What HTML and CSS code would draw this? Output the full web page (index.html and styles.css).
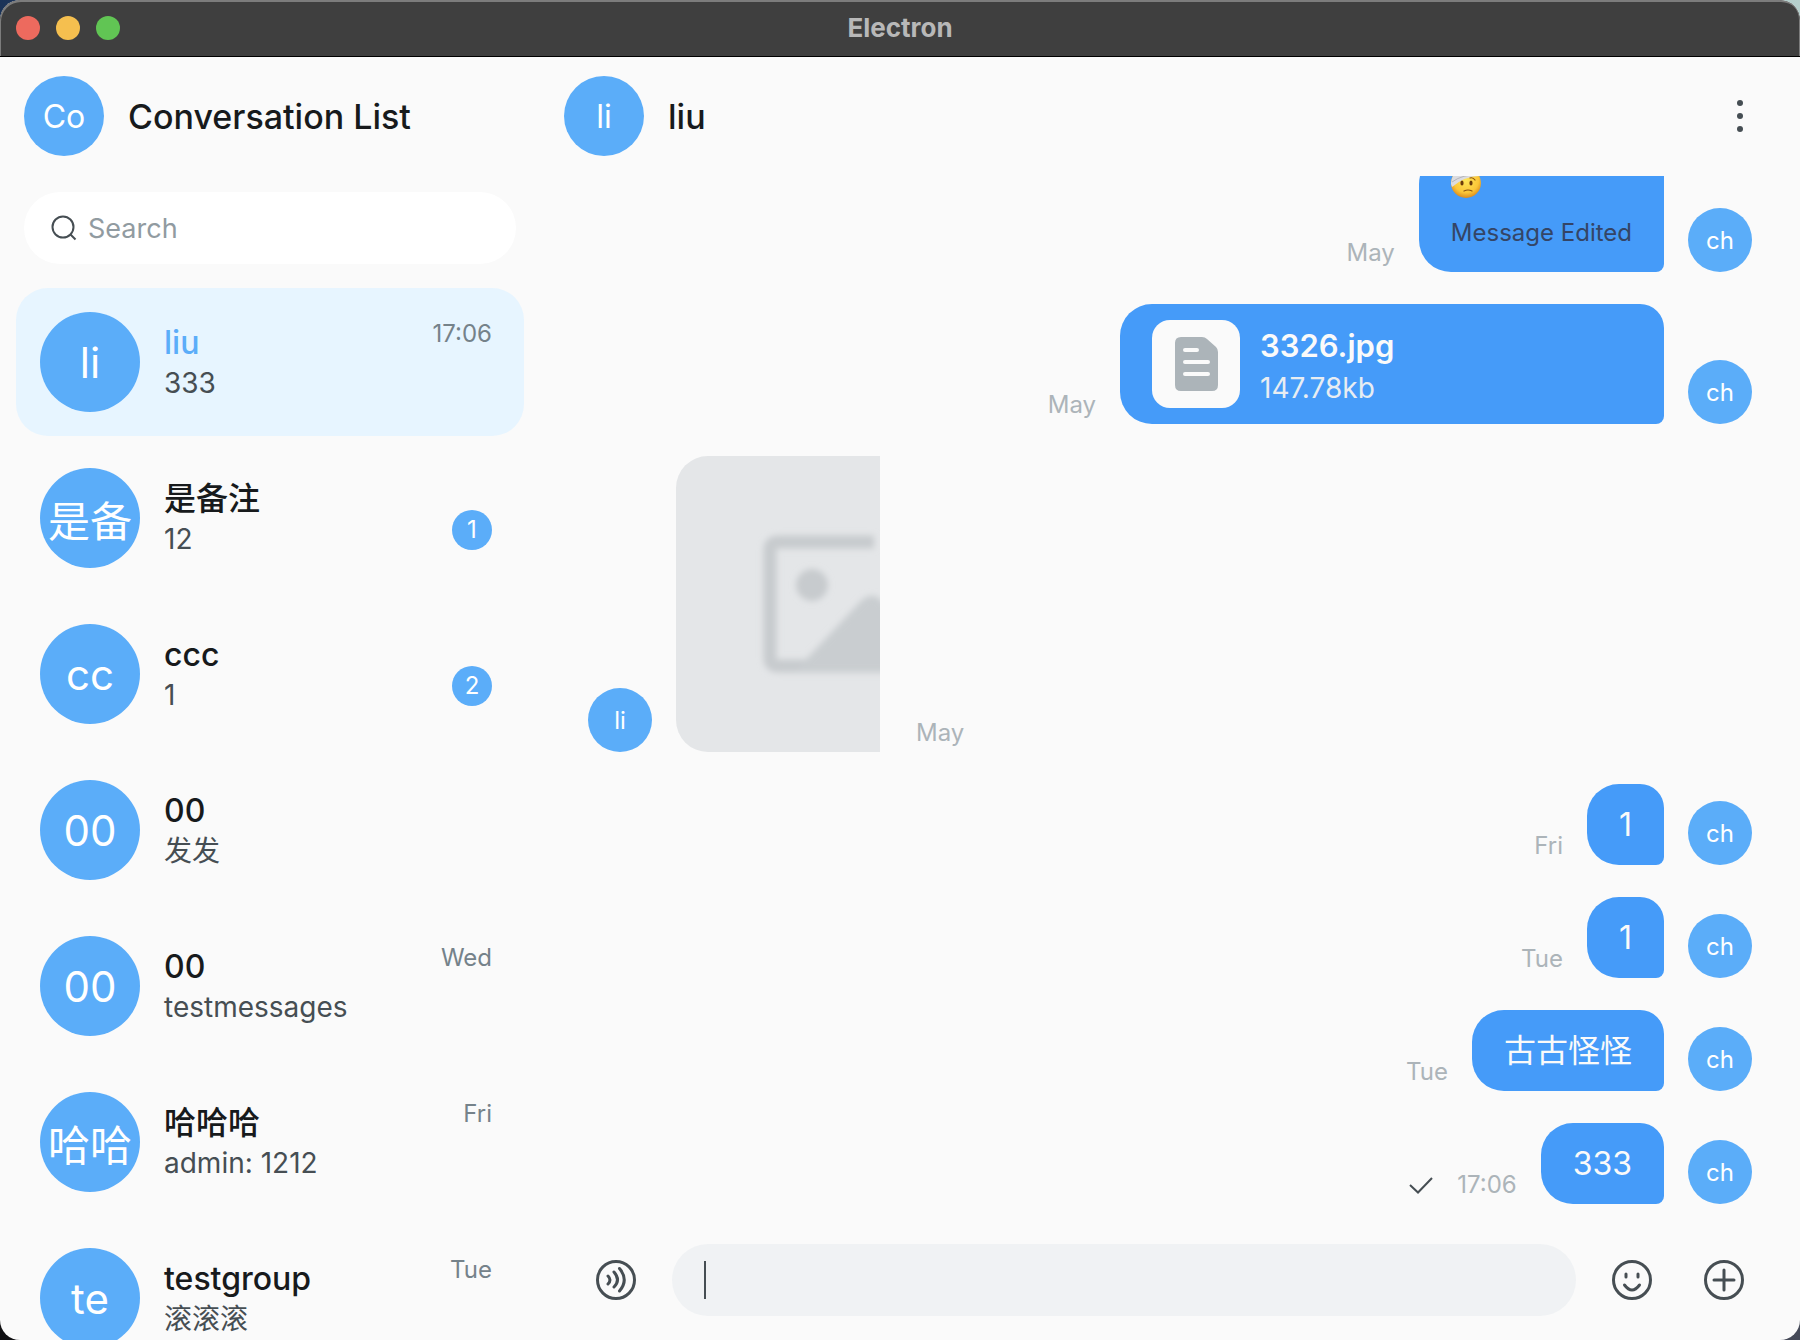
FILE: index.html
```html
<!DOCTYPE html>
<html lang="en">
<head>
<meta charset="utf-8">
<title>Electron</title>
<link rel="stylesheet" href="styles.css">
</head>
<body>
<div class="window">
  <header class="titlebar">
    <div class="lights"><button class="light close" aria-label="Close"></button><button class="light minimize" aria-label="Minimize"></button><button class="light expand" aria-label="Zoom"></button></div>
    <div class="window-title">Electron</div>
  </header>
  <div class="app">
    <aside class="sidebar">
      <div class="pane-header"><span class="avatar avatar-md">Co</span><h1 class="pane-title">Conversation List</h1></div>
      <label class="search">
        <svg class="search-icon" viewBox="0 0 24 24" aria-hidden="true"><circle cx="11" cy="11" r="10.5"/><path d="M18.5 18.5 23.5 23.5"/></svg>
        <input class="search-input" type="search" placeholder="Search" aria-label="Search">
      </label>
      <ul class="conversations">
        <li class="conversation selected"><span class="avatar avatar-lg">li</span><div class="summary"><div class="name">liu</div><div class="preview">333</div></div><div class="meta"><time class="when">17:06</time></div></li>
        <li class="conversation"><span class="avatar avatar-lg">是备</span><div class="summary"><div class="name">是备注</div><div class="preview">12</div></div><div class="meta"><span class="badge">1</span></div></li>
        <li class="conversation"><span class="avatar avatar-lg">cc</span><div class="summary"><div class="name">ccc</div><div class="preview">1</div></div><div class="meta"><span class="badge">2</span></div></li>
        <li class="conversation"><span class="avatar avatar-lg">00</span><div class="summary"><div class="name">00</div><div class="preview">发发</div></div><div class="meta"></div></li>
        <li class="conversation"><span class="avatar avatar-lg">00</span><div class="summary"><div class="name">00</div><div class="preview">testmessages</div></div><div class="meta"><time class="when">Wed</time></div></li>
        <li class="conversation"><span class="avatar avatar-lg">哈哈</span><div class="summary"><div class="name">哈哈哈</div><div class="preview">admin: 1212</div></div><div class="meta"><time class="when">Fri</time></div></li>
        <li class="conversation"><span class="avatar avatar-lg">te</span><div class="summary"><div class="name">testgroup</div><div class="preview">滚滚滚</div></div><div class="meta"><time class="when">Tue</time></div></li>
      </ul>
    </aside>
    <main class="chat">
      <div class="pane-header"><span class="avatar avatar-md">li</span><h2 class="pane-title">liu</h2>
        <button class="icon-button more" aria-label="More"><svg viewBox="0 0 40 40"><circle cx="20" cy="7" r="3"/><circle cx="20" cy="20" r="3"/><circle cx="20" cy="33" r="3"/></svg></button>
      </div>
      <div class="messages">
        <div class="message mine"><time class="stamp">May</time>
          <div class="bubble">
            <svg class="emoji" viewBox="0 0 30 30" role="img" aria-label="Face with head bandage">
              <defs><radialGradient id="face" cx="50%" cy="40%" r="60%"><stop offset="0" stop-color="#ffe658"/><stop offset=".7" stop-color="#fbc638"/><stop offset="1" stop-color="#d98b1f"/></radialGradient></defs>
              <circle cx="15" cy="15" r="15" fill="url(#face)"/>
              <path d="M0 16A15 15 0 0 1 28 8Q14 8 1 19Z" fill="#dcdcdf"/><path d="M1 14Q12 6 27 7" fill="none" stroke="#b5b5ba"/>
              <ellipse cx="11" cy="15" rx="1.6" ry="2.6" fill="#6b3b0c"/><ellipse cx="20" cy="15" rx="1.6" ry="2.6" fill="#6b3b0c"/>
              <path d="M19 10Q22 9 24 12M13 23Q17 21 21 23" fill="none" stroke="#8a5210" stroke-width="1.2" stroke-linecap="round"/>
            </svg>
            <div class="edited">Message Edited</div>
          </div>
          <span class="avatar avatar-sm">ch</span></div>
        <div class="message mine"><time class="stamp">May</time>
          <div class="bubble file">
            <span class="file-icon"><svg viewBox="0 0 44 54" aria-hidden="true"><path d="M7 0H28Q31 0 33 2L42 10Q44 12 44 15V48Q44 54 38 54H7Q1 54 1 48V6Q1 0 7 0Z" fill="#acb4b9"/><path d="M11 13H23M11 25H34M11 37H34" stroke="#fafafa" stroke-width="4" stroke-linecap="round"/></svg></span>
            <div class="file-text"><div class="file-name">3326.jpg</div><div class="file-size">147.78kb</div></div>
          </div>
          <span class="avatar avatar-sm">ch</span></div>
        <div class="message theirs"><span class="avatar avatar-sm">li</span>
          <div class="picture"><svg viewBox="0 0 204 296" role="img" aria-label="Image placeholder">
            <defs><filter id="soft" x="-20%" y="-20%" width="140%" height="140%"><feGaussianBlur stdDeviation="3"/></filter></defs>
            <g filter="url(#soft)"><path d="M198 86H102Q94 86 94 94V202Q94 210 102 210H230" fill="none" stroke="#c7cbce" stroke-width="13"/><circle cx="136" cy="129" r="16" fill="#c7cbce"/><path d="M122 212 182 148Q190 138 200 140L260 190V216H122Z" fill="#c9cdd0"/></g>
          </svg></div>
          <time class="stamp">May</time></div>
        <div class="message mine"><time class="stamp">Fri</time><div class="bubble">1</div><span class="avatar avatar-sm">ch</span></div>
        <div class="message mine"><time class="stamp">Tue</time><div class="bubble">1</div><span class="avatar avatar-sm">ch</span></div>
        <div class="message mine"><time class="stamp">Tue</time><div class="bubble">古古怪怪</div><span class="avatar avatar-sm">ch</span></div>
        <div class="message mine"><svg class="sent" viewBox="0 0 24 24" role="img" aria-label="Sent"><path d="M1 13 9 20.500 23 6"/></svg><time class="stamp">17:06</time><div class="bubble">333</div><span class="avatar avatar-sm">ch</span></div>
      </div>
      <form class="composer">
        <button type="button" class="icon-button" aria-label="Voice message"><svg viewBox="0 0 40 40"><g class="line"><circle cx="20" cy="20" r="18.500"/><path d="M12 16Q16 20 12 24M18 12Q25 20 18 27M23.500 8.500Q33 20 23.500 31"/></g></svg></button>
        <label class="entry"><span class="caret"></span><input class="entry-input" type="text" aria-label="Message"></label>
        <div class="tools">
          <button type="button" class="icon-button" aria-label="Emoji"><svg viewBox="0 0 40 40"><g class="line"><circle cx="20" cy="20" r="18.500"/><path d="M14 14V17M26 14V17M12.500 25Q20 35 27.500 25"/></g></svg></button>
          <button type="button" class="icon-button" aria-label="Add"><svg viewBox="0 0 40 40"><g class="line"><circle cx="20" cy="20" r="18.500"/><path d="M20 10V30M10 20H30"/></g></svg></button>
        </div>
      </form>
    </main>
  </div>
</div>
</body>
</html>
```
FILE: styles.css
```css
* { box-sizing: border-box; }
body { margin: 0; background: linear-gradient(90deg, #1b3358, #b5cfcc) top / 100% 50% no-repeat, linear-gradient(90deg, #101012, #454a58) bottom / 100% 50% no-repeat; font-family: Inter, "Noto Sans CJK SC", sans-serif; color: #171a1c; }
button { border: 0; padding: 0; background: none; }
svg { display: block; }
.window { height: 100vh; display: flex; flex-direction: column; overflow: hidden; border-radius: 20px; background: #fafafa; }
.titlebar { position: relative; z-index: 1; flex: none; height: 56px; display: grid; grid-template-columns: 1fr auto 1fr; align-items: center; padding: 0 16px; background: #3f3f3f; border-radius: 20px 20px 0 0; box-shadow: 0 1px #000, inset 1px 2px #7c7c7c, inset -1px 0 #7c7c7c; }
.lights { display: flex; gap: 16px; }
.light { width: 24px; height: 24px; border-radius: 50%; }
.close { background: #ed6a5e; }
.minimize { background: #f5bf4f; }
.expand { background: #61c554; }
.window-title { padding-bottom: 2px; font-size: 26px; font-weight: 700; color: #b8b8b8; }
.app { flex: 1; min-height: 0; display: grid; grid-template-columns: 540px 1fr; }
.sidebar { min-height: 0; overflow: hidden; }
.pane-header { flex: none; height: 120px; display: flex; align-items: center; gap: 24px; padding: 0 40px 0 24px; }
.pane-title { margin: 0; font-size: 34px; font-weight: 500; }
.avatar { flex: none; display: flex; align-items: center; justify-content: center; border-radius: 50%; background: #5badf9; color: #fff; white-space: nowrap; }
.avatar-sm { width: 64px; height: 64px; font-size: 24px; }
.avatar-md { width: 80px; height: 80px; font-size: 32px; }
.avatar-lg { width: 100px; height: 100px; font-size: 42px; }
.search { display: flex; align-items: center; gap: 12px; height: 72px; margin: 16px 24px 24px; padding: 0 28px; border-radius: 36px; background: #fff; }
.search-icon { width: 24px; height: 24px; fill: none; stroke: #464e53; stroke-width: 2; overflow: visible; }
.search-input { flex: 1; min-width: 0; border: 0; padding: 0; background: none; outline: 0; font: inherit; font-size: 27px; }
.search-input::placeholder { color: #919ba1; opacity: 1; }
.conversations { display: flex; flex-direction: column; gap: 8px; margin: 0; padding: 0 16px; list-style: none; }
.conversation { flex: none; height: 148px; display: flex; gap: 24px; padding: 24px 32px 24px 24px; border-radius: 32px; }
.selected { background: #e7f5ff; }
.summary { flex: 1; min-width: 0; align-self: center; padding-bottom: 2px; white-space: nowrap; }
.name { font-size: 32px; line-height: 44px; font-weight: 500; }
.selected .name { color: #5badf9; }
.preview { font-size: 28px; line-height: 36px; color: #464e53; }
.meta { display: flex; flex-direction: column; align-items: flex-end; padding-top: 6px; }
.when { font-size: 24px; line-height: 32px; color: #75828a; }
.badge { width: 40px; height: 40px; margin-top: 36px; border-radius: 50%; background: #5badf9; color: #fff; font-size: 24px; line-height: 40px; text-align: center; }
.chat { min-width: 0; min-height: 0; display: flex; flex-direction: column; }
.more { margin-left: auto; }
.icon-button { flex: none; width: 40px; height: 40px; fill: #464e53; }
.line { fill: none; stroke: #464e53; stroke-width: 3; stroke-linecap: round; }
.messages { flex: 1; min-height: 0; overflow: hidden; display: flex; flex-direction: column; justify-content: flex-end; gap: 32px; padding: 0 48px 16px; }
.message { flex: none; display: flex; align-items: flex-end; gap: 24px; }
.mine { justify-content: flex-end; }
.stamp { font-size: 24px; line-height: 38px; color: #acb4b9; }
.bubble { padding: 16px 32px; border-radius: 32px 24px 8px 32px; background: #459bf9; color: #fafafa; font-size: 32px; line-height: 49px; }
.emoji { width: 30px; height: 30px; }
.edited { margin-top: 12px; font-size: 24px; line-height: 46px; color: #344566; }
.file { display: flex; align-items: center; gap: 20px; width: 544px; }
.file-icon { width: 88px; height: 88px; display: grid; place-items: center; border-radius: 18px; background: #fafafa; }
.file-icon svg { width: 44px; height: 54px; }
.file-text { padding-top: 4px; }
.file-name { font-size: 31px; line-height: 44px; font-weight: 600; }
.file-size { font-size: 28px; line-height: 40px; color: #e8edf2; }
.picture { width: 204px; height: 296px; margin-right: 12px; border-radius: 32px 0 0 32px; background: #e4e6e8; overflow: hidden; }
.sent { width: 24px; height: 24px; margin: 0 0 8px; fill: none; stroke: #464e53; stroke-width: 2; }
.composer { flex: none; display: flex; align-items: center; gap: 36px; padding: 24px 56px; }
.entry { flex: 1; min-width: 0; height: 72px; display: flex; align-items: center; padding: 0 32px; border-radius: 36px; background: #f0f2f4; }
.caret { width: 2px; height: 38px; background: #464e53; }
.entry-input { flex: 1; min-width: 0; border: 0; padding: 0; background: none; outline: 0; font: inherit; font-size: 32px; }
.tools { display: flex; gap: 52px; }
```
